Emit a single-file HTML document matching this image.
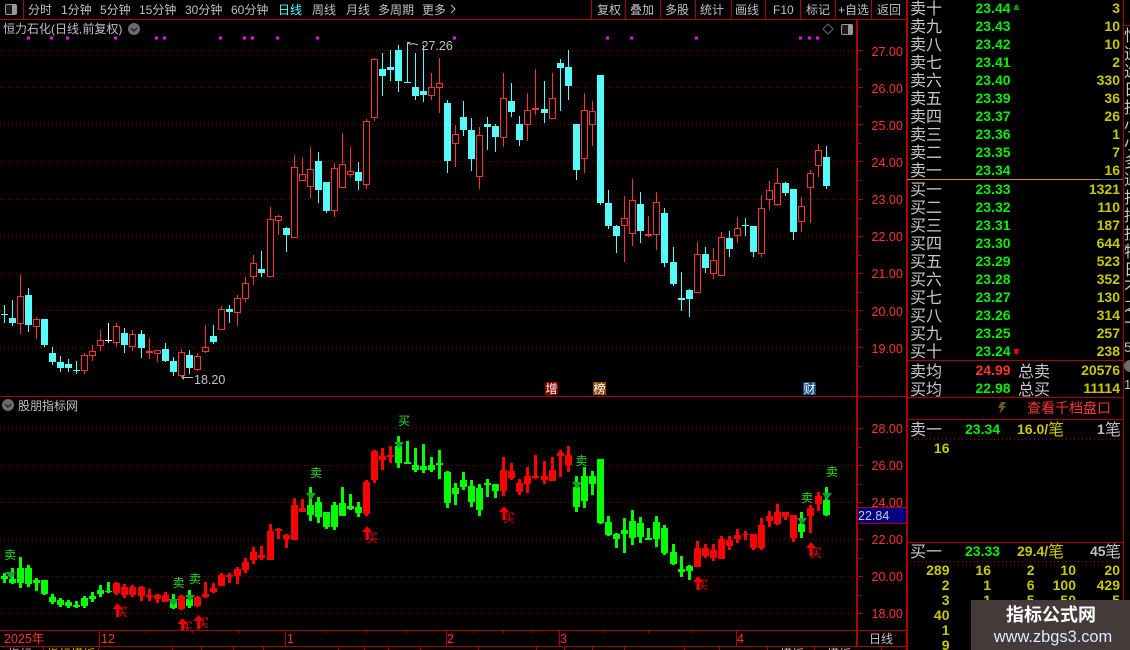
<!DOCTYPE html>
<html><head><meta charset="utf-8"><style>
html,body{margin:0;padding:0;background:#000;width:1130px;height:650px;overflow:hidden}
svg{display:block;position:absolute;left:0;top:0}
text{font-family:"Liberation Sans","WenQuanYi Zen Hei","Noto Sans CJK SC",sans-serif}
.c{font-family:"WenQuanYi Zen Hei","Noto Sans CJK SC",sans-serif}
.m{font-size:12px;fill:#c0c0c0}
.l{font-size:16px;fill:#c8c8c8}
.gn{font-size:14px;font-weight:bold;fill:#00f000}
.rd{font-size:14px;font-weight:bold;fill:#ff3232}
.y{font-size:14px;font-weight:bold;fill:#c8c800;text-anchor:end}
.ax{font-size:12.5px;fill:#ff3232}
.s{font-size:12px;text-anchor:middle}
</style></head><body>
<svg width="1130" height="650" viewBox="0 0 1130 650" xmlns="http://www.w3.org/2000/svg">
<rect width="1130" height="650" fill="#000"/>
<!-- grid -->
<path d="M0 50.5H856M0 87.5H856M0 124.5H856M0 161.5H856M0 199.5H856M0 236.5H856M0 273.5H856M0 310.5H856M0 347.5H856M0 428.5H856M0 465.5H856M0 502.5H856M0 539.5H856M0 576.5H856M0 613.5H856" stroke="#800000" stroke-width="1" stroke-dasharray="1 3" fill="none"/>
<!-- magenta dots -->
<path d="M27 36.5h3v3h-3zM50 36.5h3v3h-3zM66 36.5h3v3h-3zM114 36.5h3v3h-3zM155 36.5h3v3h-3zM163 36.5h3v3h-3zM219 36.5h3v3h-3zM243 36.5h3v3h-3zM251 36.5h3v3h-3zM276 36.5h3v3h-3zM316 36.5h3v3h-3zM453 36.5h3v3h-3zM606 36.5h3v3h-3zM630 36.5h3v3h-3zM695 36.5h3v3h-3zM799 36.5h3v3h-3zM808 36.5h3v3h-3zM816 36.5h3v3h-3z" fill="#ff00ff"/>
<!-- main wicks cyan -->
<path stroke="#54fcfc" stroke-width="1" fill="none" d="M4.5 305V323M12.5 300V326M28.5 288V332M44.5 319V347M52.5 347V365M60.5 356V372M68.5 359V372M76.5 361V374M124.5 328V353M141.5 330V358M165.5 343V362M173.5 357V376M189.5 350V374M213.5 325V344M229.5 305V323M261.5 251V277M286.5 227V252M318.5 152V203M326.5 182V213M358.5 162V190M382.5 53V96M390.5 50V81M398.5 45V92M407.5 43V83M415.5 53V100M423.5 45V102M447.5 100V173M463.5 101V136M471.5 118V171M487.5 117V150M495.5 124V152M511.5 83V117M519.5 116V146M544.5 81V123M560.5 59V111M568.5 50V100M576.5 124V180M600.5 75V205M608.5 190V229M616.5 225V253M640.5 192V243M664.5 208V267M673.5 247V286M681.5 272V311M689.5 289V317M705.5 247V273M729.5 231V257M745.5 218V236M753.5 226V257M785.5 182V196M793.5 189V240M826.5 146V189"/>
<!-- main bodies cyan -->
<path fill="#54fcfc" d="M1 314h7v1h-7zM9 318h7v5h-7zM25 295h7v30h-7zM41 319h7v26h-7zM49 353h7v9h-7zM57 362h7v6h-7zM65 364h7v4h-7zM73 370h7v1h-7zM121 333h7v12h-7zM138 334h7v14h-7zM162 349h7v12h-7zM170 361h7v11h-7zM186 355h7v13h-7zM210 336h7v6h-7zM226 309h7v3h-7zM258 269h7v4h-7zM283 228h7v7h-7zM315 161h7v29h-7zM323 182h7v29h-7zM355 172h7v9h-7zM379 69h7v7h-7zM387 67h7v3h-7zM395 50h7v31h-7zM404 82h7v1h-7zM412 87h7v9h-7zM420 91h7v4h-7zM444 103h7v58h-7zM460 117h7v13h-7zM468 130h7v29h-7zM484 124h7v3h-7zM492 126h7v11h-7zM508 101h7v11h-7zM516 124h7v16h-7zM541 109h7v4h-7zM557 63h7v5h-7zM565 67h7v19h-7zM573 124h7v46h-7zM597 75h7v128h-7zM605 203h7v23h-7zM613 226h7v10h-7zM637 204h7v27h-7zM661 213h7v50h-7zM670 262h7v22h-7zM678 298h7v2h-7zM686 290h7v9h-7zM702 254h7v14h-7zM726 238h7v11h-7zM742 225h7v1h-7zM750 226h7v26h-7zM782 183h7v10h-7zM790 189h7v43h-7zM823 157h7v29h-7z"/>
<!-- white doji -->
<path stroke="#fff" stroke-width="1" d="M108.5 323V343M105 340.5h7"/>
<!-- main wicks red -->
<path stroke="#ff3232" stroke-width="1" fill="none" d="M20.5 275V334M36.5 317V339M84.5 353V374M92.5 345V361M100.5 330V351M116.5 323V346M132.5 330V351M149.5 338V359M157.5 350V362M181.5 349V377M197.5 353V371M205.5 325V353M221.5 306V330M237.5 295V326M245.5 277V302M253.5 255V285M270.5 207V277M278.5 215V235M294.5 155V238M302.5 158V181M310.5 147V198M334.5 163V217M342.5 133V188M350.5 147V177M366.5 119V189M374.5 58V121M431.5 73V100M439.5 58V113M455.5 125V167M479.5 127V189M503.5 73V147M527.5 93V141M535.5 69V115M552.5 73V119M584.5 93V173M592.5 101V146M624.5 196V262M632.5 179V246M648.5 216V237M656.5 192V250M697.5 242V293M713.5 248V279M721.5 232V276M737.5 217V243M761.5 195V257M769.5 181V210M777.5 168V206M801.5 197V232M810.5 170V223M818.5 144V177"/>
<!-- main bodies red hollow -->
<path stroke="#ff3232" stroke-width="1" fill="#000" d="M17.5 296.5h6v27h-6zM33.5 319.5h6v7h-6zM81.5 355.5h6v15h-6zM89.5 351.5h6v4h-6zM97.5 340.5h6v5h-6zM113.5 326.5h6v16h-6zM129.5 334.5h6v12h-6zM154.5 350.5h6v3h-6zM178.5 352.5h6v23h-6zM194.5 356.5h6v13h-6zM202.5 347.5h6v4h-6zM218.5 309.5h6v20h-6zM234.5 298.5h6v14h-6zM242.5 283.5h6v15h-6zM250.5 263.5h6v13h-6zM267.5 219.5h6v57h-6zM275.5 216.5h6v4h-6zM291.5 167.5h6v70h-6zM299.5 174.5h6v6h-6zM307.5 169.5h6v17h-6zM331.5 168.5h6v42h-6zM339.5 164.5h6v23h-6zM347.5 171.5h6v3h-6zM363.5 121.5h6v63h-6zM371.5 59.5h6v58h-6zM428.5 87.5h6v8h-6zM436.5 83.5h6v4h-6zM452.5 134.5h6v9h-6zM476.5 135.5h6v41h-6zM500.5 98.5h6v39h-6zM524.5 110.5h6v14h-6zM549.5 98.5h6v20h-6zM581.5 110.5h6v48h-6zM589.5 111.5h6v13h-6zM621.5 218.5h6v7h-6zM629.5 200.5h6v33h-6zM645.5 234.5h6v1h-6zM653.5 202.5h6v32h-6zM694.5 254.5h6v38h-6zM710.5 260.5h6v13h-6zM718.5 237.5h6v38h-6zM734.5 228.5h6v7h-6zM758.5 208.5h6v45h-6zM766.5 190.5h6v9h-6zM774.5 183.5h6v21h-6zM798.5 206.5h6v15h-6zM807.5 173.5h6v14h-6zM815.5 150.5h6v15h-6z"/>
<path fill="#ff3232" d="M146 351h7v2h-7zM532 108h7v2h-7z"/>
<!-- high/low labels -->
<path stroke="#c0c0c0" fill="none" d="M407.5 44V42.5h3M408 43l3 1.5 2-1 5 1.5"/>
<text x="421.5" y="50" font-size="12.5" fill="#c0c0c0">27.26</text>
<path stroke="#c0c0c0" fill="none" d="M182 377.5h11M182 377.5l2-2M182 377.5l2 2"/>
<text x="194" y="384" font-size="12.5" fill="#c0c0c0">18.20</text>
<!-- title -->
<text class="m" x="3" y="33" font-size="12">恒力石化(日线,前复权)</text>
<circle cx="134" cy="29" r="6" fill="#6c6c6c"/><path d="M131 28l3 3 3-3" stroke="#222" stroke-width="1.4" fill="none"/>
<path d="M828 24l5 5-5 5-5-5z" fill="none" stroke="#666"/>
<rect x="841.5" y="24.5" width="11" height="10" rx="1.5" fill="#1a1a1a" stroke="#999"/><rect x="848" y="25" width="4" height="9" fill="#999"/>
<!-- toolbar -->
<rect x="5.5" y="4.5" width="11" height="10" rx="1.5" fill="#1a1a1a" stroke="#999"/><rect x="12" y="5" width="4" height="9" fill="#999"/>
<g class="m">
<text class="m" x="28" y="14">分时</text><text class="m" x="61" y="14">1分钟</text><text class="m" x="100" y="14">5分钟</text><text class="m" x="139" y="14">15分钟</text><text class="m" x="185" y="14">30分钟</text><text class="m" x="231" y="14">60分钟</text>
<text x="278" y="14" font-size="12" fill="#54fcfc">日线</text>
<text class="m" x="312" y="14">周线</text><text class="m" x="346" y="14">月线</text><text class="m" x="378" y="14">多周期</text><text class="m" x="422" y="14">更多</text>
<path d="M451 5l4 4-4 4" stroke="#c0c0c0" fill="none"/>
<text class="m" x="597" y="14">复权</text><text class="m" x="630" y="14">叠加</text><text class="m" x="665" y="14">多股</text><text class="m" x="700" y="14">统计</text><text class="m" x="735" y="14">画线</text><text class="m" x="773" y="14">F10</text><text class="m" x="806" y="14">标记</text><text class="m" x="838" y="14">+自选</text><text class="m" x="877" y="14">返回</text>
</g>
<!-- frame lines -->
<path stroke="#b00000" stroke-width="1" fill="none" d="M0 19.5H907M23.5 0V19M591.5 0V19M625.5 0V19M660.5 0V19M695.5 0V19M731.5 0V19M765.5 0V19M800.5 0V19M835.5 0V19M871.5 0V19M856.5 19V646M857.5 19V646M0 396.5H907M0 630.5H907M0 646.5H907M906.5 0V650M907.5 0V650M1123.5 0V650M99.5 630V646M285.5 630V646M446.5 630V646M559.5 630V646M736.5 630V646M146.5 630V633M192.5 630V633M239.5 630V633M325.5 630V633M366.5 630V633M406.5 630V633M474.5 630V633M503.5 630V633M531.5 630V633M603.5 630V633M648.5 630V633M692.5 630V633M857 50.5h6M857 87.5h6M857 124.5h6M857 161.5h6M857 199.5h6M857 236.5h6M857 273.5h6M857 310.5h6M857 347.5h6M857 69.5h4M857 106.5h4M857 143.5h4M857 180.5h4M857 218.5h4M857 255.5h4M857 292.5h4M857 329.5h4M857 366.5h4M857 428.5h6M857 465.5h6M857 502.5h6M857 539.5h6M857 576.5h6M857 613.5h6M857 447.5h4M857 484.5h4M857 521.5h4M857 558.5h4M857 595.5h4M43.5 647V650M98.5 647V650M172.5 647V650M201.5 647V650M233.5 647V650M263.5 647V650M338.5 647V650M364.5 647V650M388.5 647V650M420.5 647V650M478.5 647V650M536.5 647V650M564.5 647V650M592.5 647V650M624.5 647V650M684.5 647V650M719.5 647V650M767.5 647V650M814.5 647V650M881.5 647V650M907 360.5H1124M907 397.5H1124M907 419.5H1124M907 542.5H1124M1124 25.5H1130"/>
<!-- axis labels -->
<g>
<text class="ax" x="871.5" y="56">27.00</text><text class="ax" x="871.5" y="93">26.00</text><text class="ax" x="871.5" y="130">25.00</text><text class="ax" x="871.5" y="167">24.00</text><text class="ax" x="871.5" y="204">23.00</text><text class="ax" x="871.5" y="241">22.00</text><text class="ax" x="871.5" y="278">21.00</text><text class="ax" x="871.5" y="316">20.00</text><text class="ax" x="871.5" y="353">19.00</text>
<text class="ax" x="871.5" y="433">28.00</text><text class="ax" x="871.5" y="470">26.00</text><text class="ax" x="871.5" y="507">24.00</text><text class="ax" x="871.5" y="544">22.00</text><text class="ax" x="871.5" y="581">20.00</text><text class="ax" x="871.5" y="618">18.00</text>
</g>
<rect x="858" y="507" width="48" height="16" fill="#000080"/>
<path d="M858 507.5H907M858 523.5H907" stroke="#b00000"/>
<text x="858" y="520" font-size="12.5" fill="#c8c8c8">22.84</text>
<!-- badges -->
<rect x="545" y="382" width="13" height="13" fill="#8c0000"/><text x="551.5" y="393" font-size="12" text-anchor="middle" fill="#fff">增</text>
<rect x="593" y="382" width="13" height="13" fill="#8c4a08"/><text x="599.5" y="393" font-size="12" text-anchor="middle" fill="#fff">榜</text>
<rect x="803" y="382" width="13" height="13" fill="#104a80"/><text x="809.5" y="393" font-size="12" text-anchor="middle" fill="#fff">财</text>
<!-- lower title -->
<circle cx="8" cy="405" r="6" fill="#6c6c6c"/><path d="M5 404l3 3 3-3" stroke="#222" stroke-width="1.4" fill="none"/>
<text class="m" x="18" y="410">股朋指标网</text>
<!-- lower green wicks -->
<path stroke="#00ff00" stroke-width="3" fill="none" d="M4.5 573V583M12.5 568V584M20.5 557V588M28.5 565V587M36.5 578V591M44.5 580V595M52.5 594V604M60.5 598V607M68.5 600V608M76.5 601V608M84.5 596V608M92.5 592V602M100.5 585V597M108.5 582V593M173.5 594V609M189.5 590V608M310.5 487V521M318.5 497V523M326.5 512V529M334.5 502V530M342.5 487V516M350.5 494V510M358.5 502V517M398.5 436V468M407.5 441V464M415.5 448V472M423.5 444V473M431.5 457V472M439.5 450V479M447.5 471V508M455.5 483V505M463.5 472V490M471.5 480V507M479.5 484V516M487.5 479V497M495.5 484V498M576.5 476V512M584.5 467V508M592.5 471V495M600.5 459V524M608.5 516V536M616.5 533V548M624.5 518V553M632.5 510V545M640.5 517V543M648.5 528V540M656.5 516V547M664.5 525V555M673.5 544V565M681.5 556V577M689.5 565V580M801.5 512V538M826.5 487V516"/>
<!-- lower green bodies -->
<path stroke="#00ff00" stroke-width="7" fill="none" d="M4.5 576V579M12.5 579V583M20.5 568V583M28.5 568V584M36.5 580V583M44.5 580V594M52.5 597V602M60.5 600V605M68.5 602V606M76.5 605V607M84.5 598V606M92.5 596V599M100.5 590V594M108.5 591V592M173.5 600V608M189.5 599V606M310.5 505V515M318.5 502V517M326.5 512V527M334.5 505V527M342.5 503V516M350.5 506V509M358.5 507V513M398.5 446V463M407.5 462V464M415.5 465V470M423.5 466V470M431.5 465V470M439.5 463V465M447.5 472V503M455.5 488V494M463.5 480V487M471.5 486V502M479.5 488V510M487.5 483V485M495.5 484V491M576.5 487V507M584.5 476V501M592.5 476V484M600.5 459V523M608.5 522V535M616.5 534V539M624.5 530V534M632.5 521V538M640.5 523V537M648.5 538V540M656.5 522V539M664.5 528V553M673.5 552V564M681.5 569V572M689.5 566V571M801.5 524V532M826.5 500V515"/>
<!-- lower red wicks -->
<path stroke="#ff0000" stroke-width="3" fill="none" d="M116.5 582V595M124.5 584V598M132.5 585V597M141.5 586V601M149.5 589V601M157.5 594V603M165.5 592V602M181.5 595V610M197.5 596V607M205.5 582V598M213.5 583V593M221.5 573V586M229.5 573V583M237.5 567V584M245.5 558V573M253.5 547V564M261.5 546V560M270.5 524V560M278.5 528V539M286.5 534V548M294.5 498V540M302.5 499V512M366.5 480V516M374.5 450V483M382.5 448V470M390.5 446V463M503.5 457V496M511.5 463V480M519.5 479V495M527.5 467V493M535.5 455V479M544.5 461V484M552.5 457V481M560.5 450V477M568.5 446V472M697.5 541V567M705.5 544V558M713.5 544V561M721.5 536V559M729.5 536V550M737.5 529V543M745.5 531V540M753.5 534V550M761.5 518V550M769.5 511V527M777.5 504V525M785.5 512V520M793.5 515V542M810.5 505V533M818.5 492V511"/>
<!-- lower red bodies -->
<path stroke="#ff0000" stroke-width="7" fill="none" d="M116.5 583V593M124.5 587V595M132.5 587V595M141.5 587V596M149.5 595V597M157.5 595V599M165.5 595V602M181.5 596V609M197.5 597V606M205.5 594V597M213.5 588V592M221.5 575V586M229.5 575V577M237.5 569V576M245.5 562V570M253.5 552V560M261.5 555V558M270.5 531V560M278.5 529V531M286.5 535V539M294.5 505V540M302.5 508V512M366.5 482V514M374.5 451V480M382.5 456V460M390.5 455V457M503.5 470V491M511.5 471V478M519.5 483V492M527.5 476V484M535.5 476V478M544.5 476V480M552.5 470V481M560.5 453V456M568.5 455V465M697.5 548V567M705.5 548V556M713.5 550V558M721.5 539V559M729.5 540V546M737.5 535V539M745.5 534V535M753.5 534V548M761.5 525V548M769.5 516V521M777.5 512V524M785.5 512V517M793.5 515V538M810.5 508V516M818.5 496V504"/>
<!-- green down arrows -->
<path fill="#10a82a" d="M5.5 572h10l-5 7zM168.5 599h10l-5 7zM185 595h10l-5 7zM306 493h10l-5 7zM394 442h10l-5 7zM572 482h10l-5 7zM797 518h10l-5 7zM822 493h10l-5 7z"/>
<!-- red up arrows -->
<clipPath id="lo"><rect x="0" y="397" width="856" height="233"/></clipPath>
<g clip-path="url(#lo)">
<path fill="#f00000" d="M117.5 603l5 6h-3.5v8h-3v-8h-3.5zM182.5 618l5 6h-3.5v8h-3v-8h-3.5zM198.5 615l5 6h-3.5v8h-3v-8h-3.5zM367 526l5 6h-3.5v8h-3v-8h-3.5zM504 506l5 6h-3.5v8h-3v-8h-3.5zM698 576l5 6h-3.5v8h-3v-8h-3.5zM811 542l5 6h-3.5v8h-3v-8h-3.5z"/>
<g fill="#f00000">
<text class="s" x="122" y="616">买</text><text class="s" x="187" y="631">买</text><text class="s" x="203" y="627">买</text><text class="s" x="372" y="542">买</text><text class="s" x="509" y="522">买</text><text class="s" x="702.5" y="589">买</text><text class="s" x="816" y="557">买</text>
</g>
<g fill="#22e022">
<text class="s" x="10" y="559">卖</text><text class="s" x="178.5" y="587">卖</text><text class="s" x="195" y="583">卖</text><text class="s" x="316" y="477">卖</text><text class="s" x="404" y="425">买</text><text class="s" x="581.5" y="465">卖</text><text class="s" x="807" y="502">卖</text><text class="s" x="832" y="476">卖</text>
</g>
</g>
<!-- time axis -->
<text class="ax" x="4" y="643">2025年</text><text class="ax" x="101" y="643">12</text><text class="ax" x="287" y="643">1</text><text class="ax" x="447" y="643">2</text><text class="ax" x="560" y="643">3</text><text class="ax" x="737" y="643">4</text>
<text x="869" y="643" font-size="12" fill="#c0c0c0">日线</text>
<!-- clipped bottom tab strip -->
<text x="8" y="658" font-size="12" fill="#c0c0c0">指标</text><text x="47" y="658" font-size="12" fill="#c8c800">指标模板</text><text x="780" y="658" font-size="12" fill="#c0c0c0">模板</text><text x="827" y="658" font-size="12" fill="#c0c0c0">模板</text>
<!-- order book labels -->
<g class="l">
<text class="l" x="910" y="14">卖十</text><text class="l" x="910" y="32">卖九</text><text class="l" x="910" y="50">卖八</text><text class="l" x="910" y="68">卖七</text><text class="l" x="910" y="86">卖六</text><text class="l" x="910" y="104">卖五</text><text class="l" x="910" y="122">卖四</text><text class="l" x="910" y="140">卖三</text><text class="l" x="910" y="158">卖二</text><text class="l" x="910" y="176">卖一</text>
<text class="l" x="910" y="195">买一</text><text class="l" x="910" y="213">买二</text><text class="l" x="910" y="231">买三</text><text class="l" x="910" y="249">买四</text><text class="l" x="910" y="267">买五</text><text class="l" x="910" y="285">买六</text><text class="l" x="910" y="303">买七</text><text class="l" x="910" y="321">买八</text><text class="l" x="910" y="339">买九</text><text class="l" x="910" y="357">买十</text>
<text class="l" x="910" y="377">卖均</text><text class="l" x="910" y="395">买均</text><text class="l" x="1018" y="377">总卖</text><text class="l" x="1018" y="395">总买</text>
<text class="l" x="910" y="435">卖一</text><text class="l" x="910" y="557">买一</text>
</g>
<g>
<text class="gn" x="975.5" y="13">23.44</text><text class="gn" x="975.5" y="31">23.43</text><text class="gn" x="975.5" y="49">23.42</text><text class="gn" x="975.5" y="67">23.41</text><text class="gn" x="975.5" y="85">23.40</text><text class="gn" x="975.5" y="103">23.39</text><text class="gn" x="975.5" y="121">23.37</text><text class="gn" x="975.5" y="139">23.36</text><text class="gn" x="975.5" y="157">23.35</text><text class="gn" x="975.5" y="175">23.34</text>
<text class="gn" x="975.5" y="194">23.33</text><text class="gn" x="975.5" y="212">23.32</text><text class="gn" x="975.5" y="230">23.31</text><text class="gn" x="975.5" y="248">23.30</text><text class="gn" x="975.5" y="266">23.29</text><text class="gn" x="975.5" y="284">23.28</text><text class="gn" x="975.5" y="302">23.27</text><text class="gn" x="975.5" y="320">23.26</text><text class="gn" x="975.5" y="338">23.25</text><text class="gn" x="975.5" y="356">23.24</text>
<text class="rd" x="975.5" y="375">24.99</text><text class="gn" x="975.5" y="393">22.98</text>
</g>
<g>
<text class="y" x="1120" y="13">3</text><text class="y" x="1120" y="31">10</text><text class="y" x="1120" y="49">10</text><text class="y" x="1120" y="67">2</text><text class="y" x="1120" y="85">330</text><text class="y" x="1120" y="103">36</text><text class="y" x="1120" y="121">26</text><text class="y" x="1120" y="139">1</text><text class="y" x="1120" y="157">7</text><text class="y" x="1120" y="175">16</text>
<text class="y" x="1120" y="194">1321</text><text class="y" x="1120" y="212">110</text><text class="y" x="1120" y="230">187</text><text class="y" x="1120" y="248">644</text><text class="y" x="1120" y="266">523</text><text class="y" x="1120" y="284">352</text><text class="y" x="1120" y="302">130</text><text class="y" x="1120" y="320">314</text><text class="y" x="1120" y="338">257</text><text class="y" x="1120" y="356">238</text>
<text class="y" x="1120" y="375">20576</text><text class="y" x="1120" y="393">11114</text>
</g>
<path fill="#0c8c0c" d="M1016.5 4l3 3h-1.5l2 3h-7l2-3h-1.5z"/>
<path fill="#e00000" d="M1016.5 355l-3-3h1.5l-2-3h7l-2 3h1.5z"/>
<path d="M907 179.5H1100" stroke="#c89038"/><path d="M1100 179.5H1123" stroke="#4070a8"/>
<path d="M1001 402h5l-3 4h3l-7 8 2-6h-3z" fill="#6e5a1e"/>
<text x="1027" y="413" font-size="14" fill="#ff3232">查看千档盘口</text>
<text x="965" y="434" font-size="14" font-weight="bold" fill="#00f000">23.34</text>
<text x="1017" y="434" font-size="14" font-weight="bold" fill="#c8c800">16.0/</text><text x="1048" y="435" font-size="16" fill="#c8c800">笔</text>
<text x="1097" y="434" font-size="14" font-weight="bold" fill="#c0c0c0">1</text><text x="1105" y="435" font-size="16" fill="#c0c0c0">笔</text>
<path d="M910 439.5H1122M910 561.5H1122" stroke="#a00000" stroke-dasharray="1 3"/>
<text class="y" x="949.5" y="453">16</text>
<text x="965" y="556" font-size="14" font-weight="bold" fill="#00f000">23.33</text>
<text x="1017" y="556" font-size="14" font-weight="bold" fill="#c8c800">29.4/</text><text x="1048" y="557" font-size="16" fill="#c8c800">笔</text>
<text x="1090" y="556" font-size="14" font-weight="bold" fill="#c0c0c0">45</text><text x="1105" y="557" font-size="16" fill="#c0c0c0">笔</text>
<g>
<text class="y" x="949.5" y="575">289</text><text class="y" x="991" y="575">16</text><text class="y" x="1034.5" y="575">2</text><text class="y" x="1076" y="575">10</text><text class="y" x="1120" y="575">20</text>
<text class="y" x="949.5" y="590">2</text><text class="y" x="991" y="590">1</text><text class="y" x="1034.5" y="590">6</text><text class="y" x="1076" y="590">100</text><text class="y" x="1120" y="590">429</text>
<text class="y" x="949.5" y="605">3</text><text class="y" x="991" y="605">1</text><text class="y" x="1034.5" y="605">5</text><text class="y" x="1076" y="605">50</text><text class="y" x="1120" y="605">5</text>
<text class="y" x="949.5" y="620">40</text><text class="y" x="949.5" y="635">1</text><text class="y" x="949.5" y="650">9</text>
</g>
<!-- clipped far-right column -->
<clipPath id="fr"><rect x="1124" y="26" width="6" height="624"/></clipPath>
<g clip-path="url(#fr)">
<text class="l" x="1124" y="41">恒</text><text class="l" x="1124" y="59">逆</text><text class="l" x="1124" y="77">迩</text><text class="l" x="1124" y="95">日</text><text class="l" x="1124" y="113">技</text><text class="l" x="1124" y="131">小</text><text class="l" x="1124" y="149">小</text><text class="l" x="1124" y="167">多</text><text class="l" x="1124" y="185">通</text><text class="l" x="1124" y="203">指</text><text class="l" x="1124" y="221">持</text><text class="l" x="1124" y="239">技</text><text class="l" x="1124" y="257">特</text><text class="l" x="1124" y="275">日</text><text class="l" x="1124" y="293">不</text><text class="l" x="1124" y="311">之</text><text class="l" x="1124" y="329">十</text>
<text x="1124" y="352" font-size="14" fill="#c0c0c0">5</text>
<circle cx="1130" cy="366" r="6" fill="#6c6c6c"/>
<text x="1124" y="389" font-size="13" fill="#c0c0c0">1</text>
</g>
<!-- watermark -->
<rect x="971" y="600" width="159" height="50" fill="#443a3a"/>
<text x="1051" y="621" font-size="18" font-weight="bold" text-anchor="middle" fill="#fff" class="c">指标公式网</text>
<text x="1053" y="642" font-size="16.4" text-anchor="middle" fill="#dfeaff">www.zbgs3.com</text>
</svg>
</body></html>
